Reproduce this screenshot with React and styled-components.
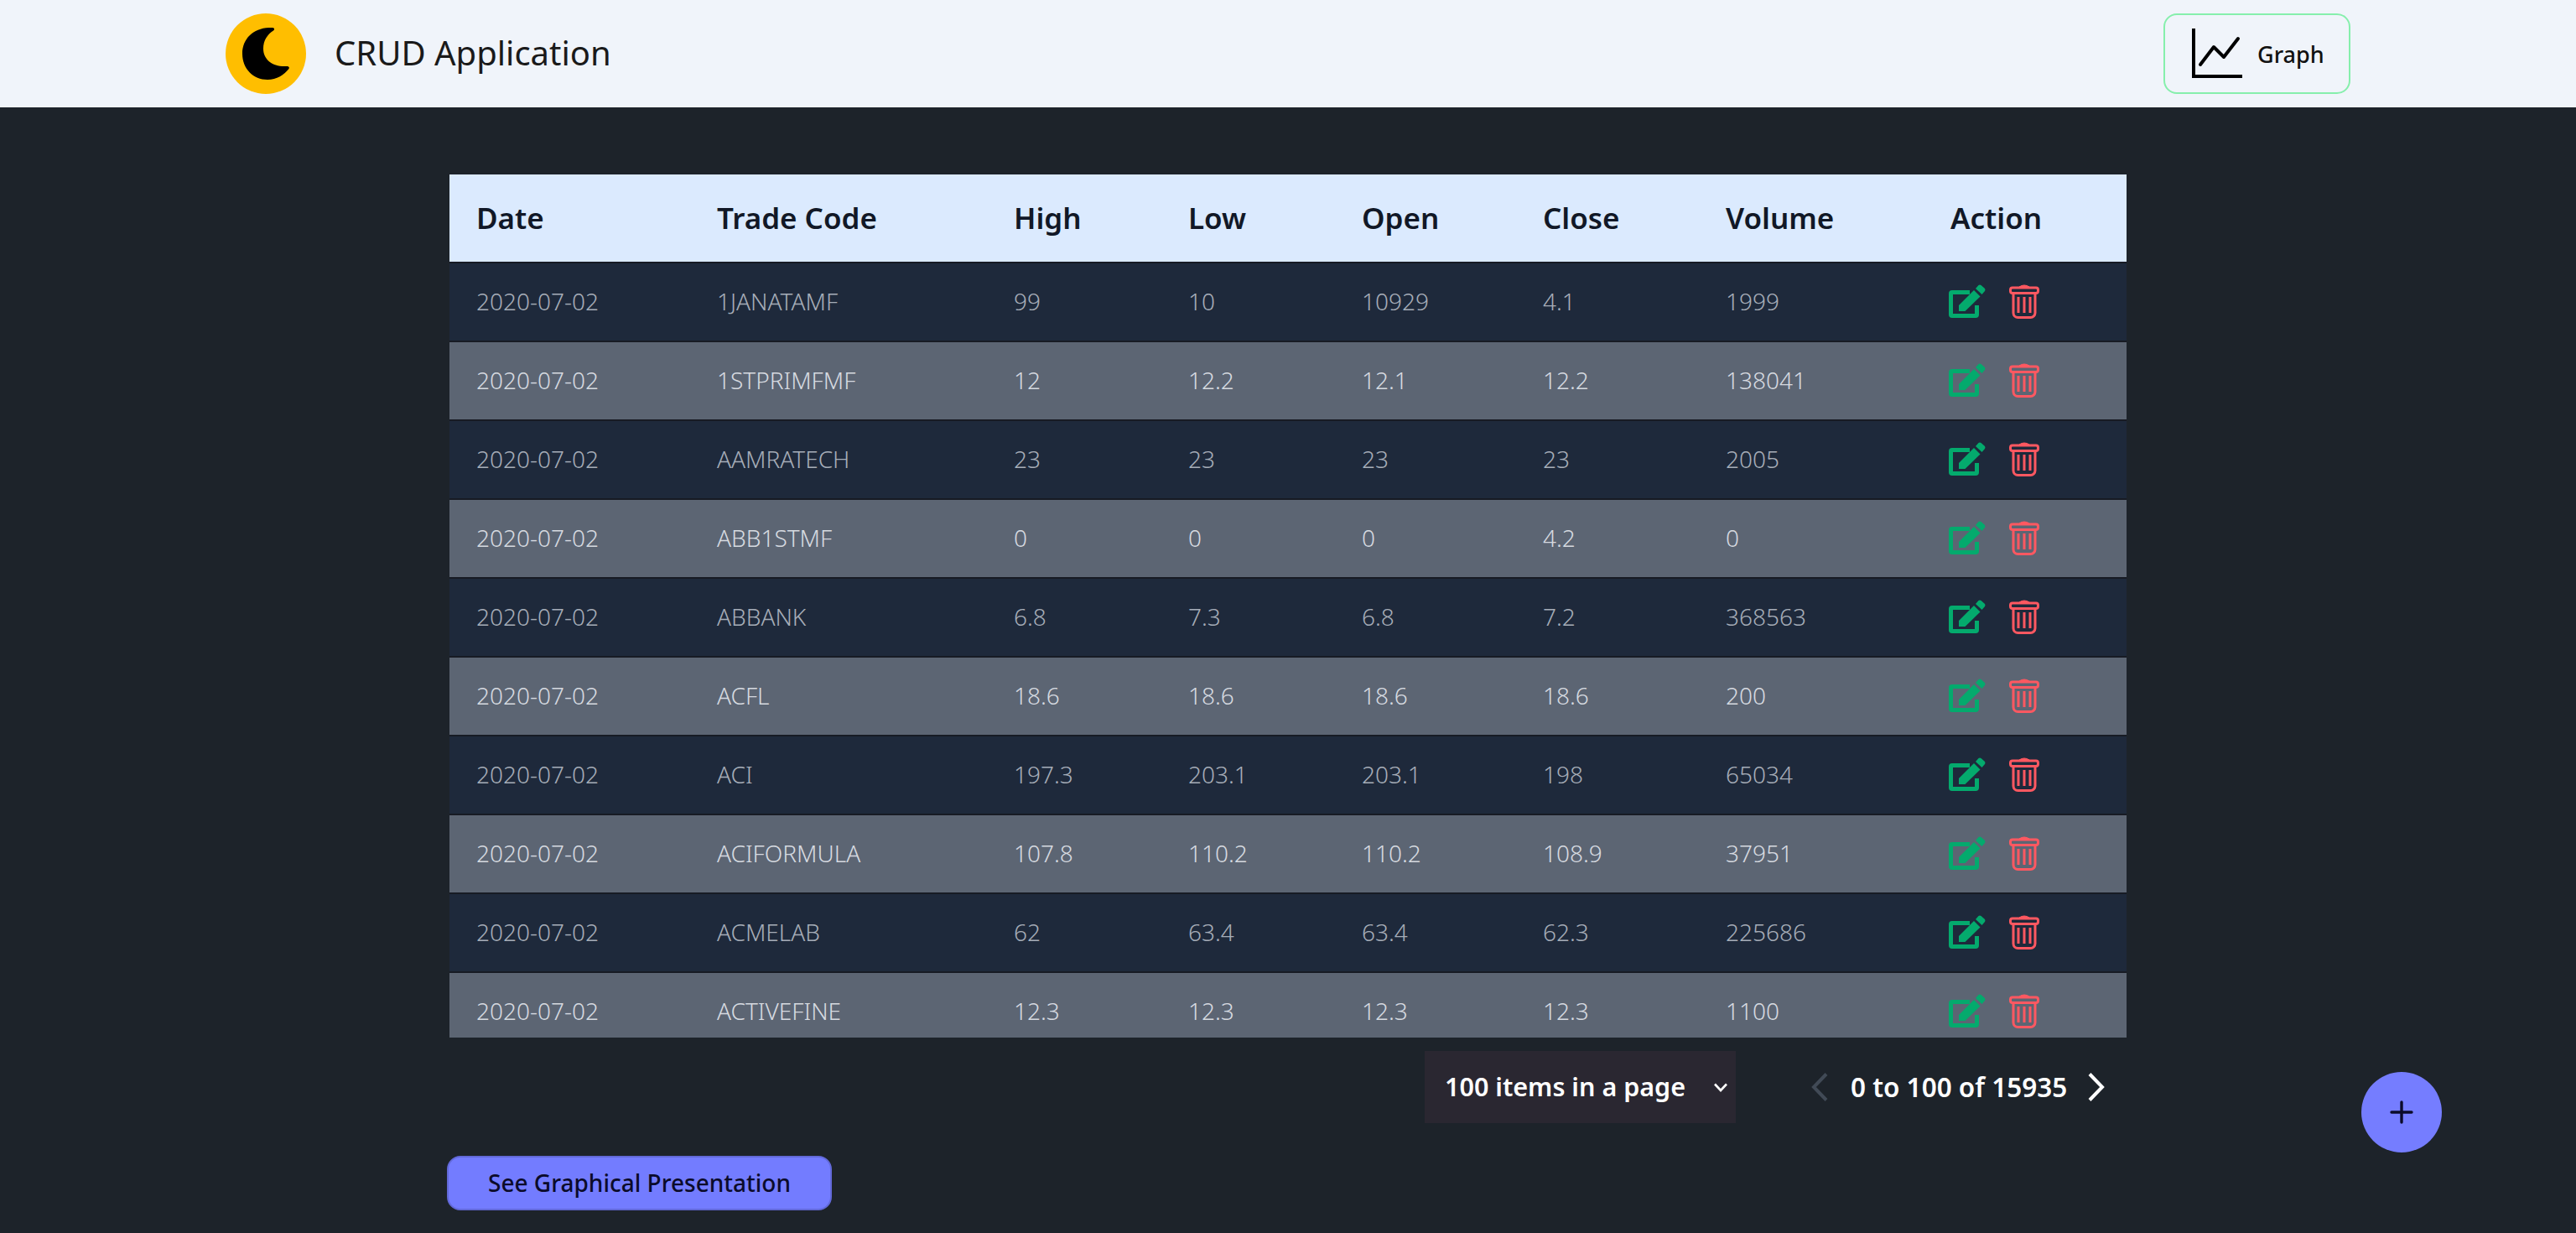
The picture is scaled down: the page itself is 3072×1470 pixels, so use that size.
import styled, { createGlobalStyle } from "styled-components";

const GlobalStyle = createGlobalStyle`
  html, body {
    margin: 0;
    padding: 0;
    background: #1d232a;
    font-family: "Noto Sans", "Open Sans", sans-serif;
  }
`;

const Page = styled.div`
  position: relative;
  height: 1470px;
  overflow: hidden;
  background: #1d232a;
`;

const Navbar = styled.header`
  height: 128px;
  box-sizing: border-box;
  padding: 0 269px;
  background: #f0f4fa;
  display: flex;
  align-items: center;
  justify-content: space-between;
`;

const Brand = styled.div`
  display: flex;
  align-items: center;
  gap: 34px;
`;

const Logo = styled.div`
  width: 96px;
  height: 96px;
  border-radius: 50%;
  background: #ffbe00;
  display: flex;
  align-items: center;
  justify-content: center;
`;

const BrandName = styled.span`
  padding-bottom: 3px;
  font-size: 40px;
  color: #1a1a1a;
`;

const GraphButton = styled.button`
  width: 223px;
  height: 96px;
  box-sizing: border-box;
  border: 2px solid #86efac;
  border-radius: 16px;
  background: transparent;
  padding: 0 0 0 32px;
  display: flex;
  align-items: center;
  gap: 18px;
  font-family: inherit;
  font-size: 27px;
  font-weight: 500;
  color: #111;
`;

const Main = styled.main`
  width: 2000px;
  margin: 80px auto 0;
`;

const TableWrap = styled.div`
  height: 1029px;
  overflow: hidden;
`;

const Table = styled.table`
  width: 2000px;
  table-layout: fixed;
  border-collapse: separate;
  border-spacing: 0;
`;

const HeadRow = styled.tr`
  background: #dbeafe;
`;

const HeadCell = styled.th`
  height: 102px;
  padding: 0 0 2px 32px;
  text-align: left;
  font-size: 35px;
  font-weight: 600;
  color: #111827;
`;

const Row = styled.tr`
  background: ${(props) => (props.$odd ? "#5c6573" : "#1e293b")};
  color: ${(props) => (props.$odd ? "#d6dae0" : "#a6adb8")};
`;

const Cell = styled.td`
  height: 90px;
  padding: 0 0 2px 32px;
  border-top: 2px solid #171b24;
  font-size: 28px;
  font-weight: 300;
`;

const Actions = styled.div`
  display: flex;
  align-items: center;
  gap: 28px;
  margin-left: -2px;
`;

const PagerRow = styled.div`
  display: flex;
  justify-content: flex-end;
  align-items: center;
  margin-top: 16px;
  padding-right: 26px;
`;

const PageSize = styled.div`
  width: 371px;
  height: 86px;
  box-sizing: border-box;
  padding: 0 10px 0 24px;
  margin-right: 90px;
  background: #2a2731;
  display: flex;
  align-items: center;
  justify-content: space-between;
  color: #fff;
  font-size: 30.5px;
  font-weight: 600;
`;

const PageSizeText = styled.span`
  padding-bottom: 2px;
`;

const Pager = styled.div`
  display: flex;
  align-items: center;
  gap: 27px;
  color: #fff;
  font-size: 31.5px;
  font-weight: 600;
`;

const PagerText = styled.span`
  width: 256px;
  padding-bottom: 2px;
  white-space: nowrap;
`;

const PresentationButton = styled.button`
  display: block;
  width: 459px;
  height: 65px;
  margin: 39px 0 0 -3px;
  padding: 0 0 2px;
  box-sizing: border-box;
  border: 2px solid #6269d8;
  border-radius: 16px;
  background: #737cff;
  font-family: inherit;
  font-size: 28px;
  font-weight: 500;
  color: #0b0b2a;
`;

const Fab = styled.button`
  position: absolute;
  left: 2816px;
  top: 1278px;
  width: 96px;
  height: 96px;
  padding: 0;
  border: none;
  border-radius: 50%;
  background: #757dff;
  display: flex;
  align-items: center;
  justify-content: center;
`;

const columns = [287, 354, 208, 207, 216, 218, 268, 242];
const heads = ["Date", "Trade Code", "High", "Low", "Open", "Close", "Volume", "Action"];

const rows = [
  ["1JANATAMF", "99", "10", "10929", "4.1", "1999"],
  ["1STPRIMFMF", "12", "12.2", "12.1", "12.2", "138041"],
  ["AAMRATECH", "23", "23", "23", "23", "2005"],
  ["ABB1STMF", "0", "0", "0", "4.2", "0"],
  ["ABBANK", "6.8", "7.3", "6.8", "7.2", "368563"],
  ["ACFL", "18.6", "18.6", "18.6", "18.6", "200"],
  ["ACI", "197.3", "203.1", "203.1", "198", "65034"],
  ["ACIFORMULA", "107.8", "110.2", "110.2", "108.9", "37951"],
  ["ACMELAB", "62", "63.4", "63.4", "62.3", "225686"],
  ["ACTIVEFINE", "12.3", "12.3", "12.3", "12.3", "1100"],
];

function MoonIcon() {
  return (
    <svg width="56" height="62" viewBox="0 0 56 62">
      <path
        d="M36 0 C15 -1 0 12 0 31 C0 49 13 62 30 62 C41 62 50 56 55.5 49 C56.5 47 55 46 53 46 C36 47 25 38 25 25 C25 15 30 8 37 3.5 C39 2 38 0 36 0 Z"
        fill="#000"
      />
    </svg>
  );
}

function ChartIcon() {
  return (
    <svg width="60" height="60" viewBox="0 0 60 60" fill="none" stroke="#000">
      <path d="M2 0 V57 H60" strokeWidth="4" />
      <path d="M10 43 L26 22 L38 34 L55 12" strokeWidth="4" strokeLinecap="round" strokeLinejoin="round" />
    </svg>
  );
}

function EditIcon() {
  return (
    <svg width="44" height="40" viewBox="0 0 44 40">
      <path
        d="M25 9.5 H4 Q2.5 9.5 2.5 11 V36 Q2.5 37.5 4 37.5 H32 Q33.5 37.5 33.5 36 V25"
        fill="none"
        stroke="#04aa6d"
        strokeWidth="5"
      />
      <path d="M12 32 L12 25 L30 7 L37.5 14.5 L19.5 32 Z" fill="#04aa6d" />
      <path d="M32 5 L35.5 1 Q37 0 38.5 1 L43 5 Q44 6.5 43 8 L39.5 12 Z" fill="#04aa6d" />
    </svg>
  );
}

function TrashIcon() {
  return (
    <svg width="36" height="41" viewBox="0 0 36 41" fill="none" stroke="#ff5861" strokeWidth="3">
      <rect x="1.5" y="4" width="33" height="6.5" rx="2.5" />
      <path d="M12 3 Q18 -1 24 3 Z" fill="#ff5861" strokeWidth="1" />
      <path d="M5 10 V34 A5.5 5.5 0 0 0 10.5 39.5 H25.5 A5.5 5.5 0 0 0 31 34 V10" />
      <path d="M11 15 V34 M18 15 V34 M25 15 V34" />
    </svg>
  );
}

function Chevron({ dir, color }) {
  return (
    <svg width="20" height="34" viewBox="0 0 20 34" fill="none" stroke={color} strokeWidth="4">
      <path d={dir === "left" ? "M18 1.5 L3 17 L18 32.5" : "M2 1.5 L17 17 L2 32.5"} />
    </svg>
  );
}

function SmallArrow() {
  return (
    <svg width="16" height="11" viewBox="0 0 16 11" fill="none" stroke="#fff" strokeWidth="2.6">
      <path d="M1 1.5 L8 9 L15 1.5" />
    </svg>
  );
}

function App() {
  return (
    <Page>
      <GlobalStyle />
      <Navbar>
        <Brand>
          <Logo>
            <MoonIcon />
          </Logo>
          <BrandName>CRUD Application</BrandName>
        </Brand>
        <GraphButton>
          <ChartIcon />
          Graph
        </GraphButton>
      </Navbar>

      <Main>
        <TableWrap>
          <Table>
            <colgroup>
              {columns.map((w, i) => (
                <col key={i} width={w} />
              ))}
            </colgroup>
            <thead>
              <HeadRow>
                {heads.map((h) => (
                  <HeadCell key={h}>{h}</HeadCell>
                ))}
              </HeadRow>
            </thead>
            <tbody>
              {rows.map((r, i) => (
                <Row key={r[0]} $odd={i % 2 === 1}>
                  <Cell>2020-07-02</Cell>
                  {r.map((v, j) => (
                    <Cell key={j}>{v}</Cell>
                  ))}
                  <Cell>
                    <Actions>
                      <EditIcon />
                      <TrashIcon />
                    </Actions>
                  </Cell>
                </Row>
              ))}
            </tbody>
          </Table>
        </TableWrap>

        <PagerRow>
          <PageSize>
            <PageSizeText>100 items in a page</PageSizeText>
            <SmallArrow />
          </PageSize>
          <Pager>
            <Chevron dir="left" color="#414a56" />
            <PagerText>0 to 100 of 15935</PagerText>
            <Chevron dir="right" color="#fff" />
          </Pager>
        </PagerRow>

        <PresentationButton>See Graphical Presentation</PresentationButton>
      </Main>

      <Fab>
        <svg width="28" height="28" viewBox="0 0 28 28" stroke="#0b0b2a" strokeWidth="3.4" strokeLinecap="round">
          <path d="M14 2 V26 M2 14 H26" />
        </svg>
      </Fab>
    </Page>
  );
}

export default App;
